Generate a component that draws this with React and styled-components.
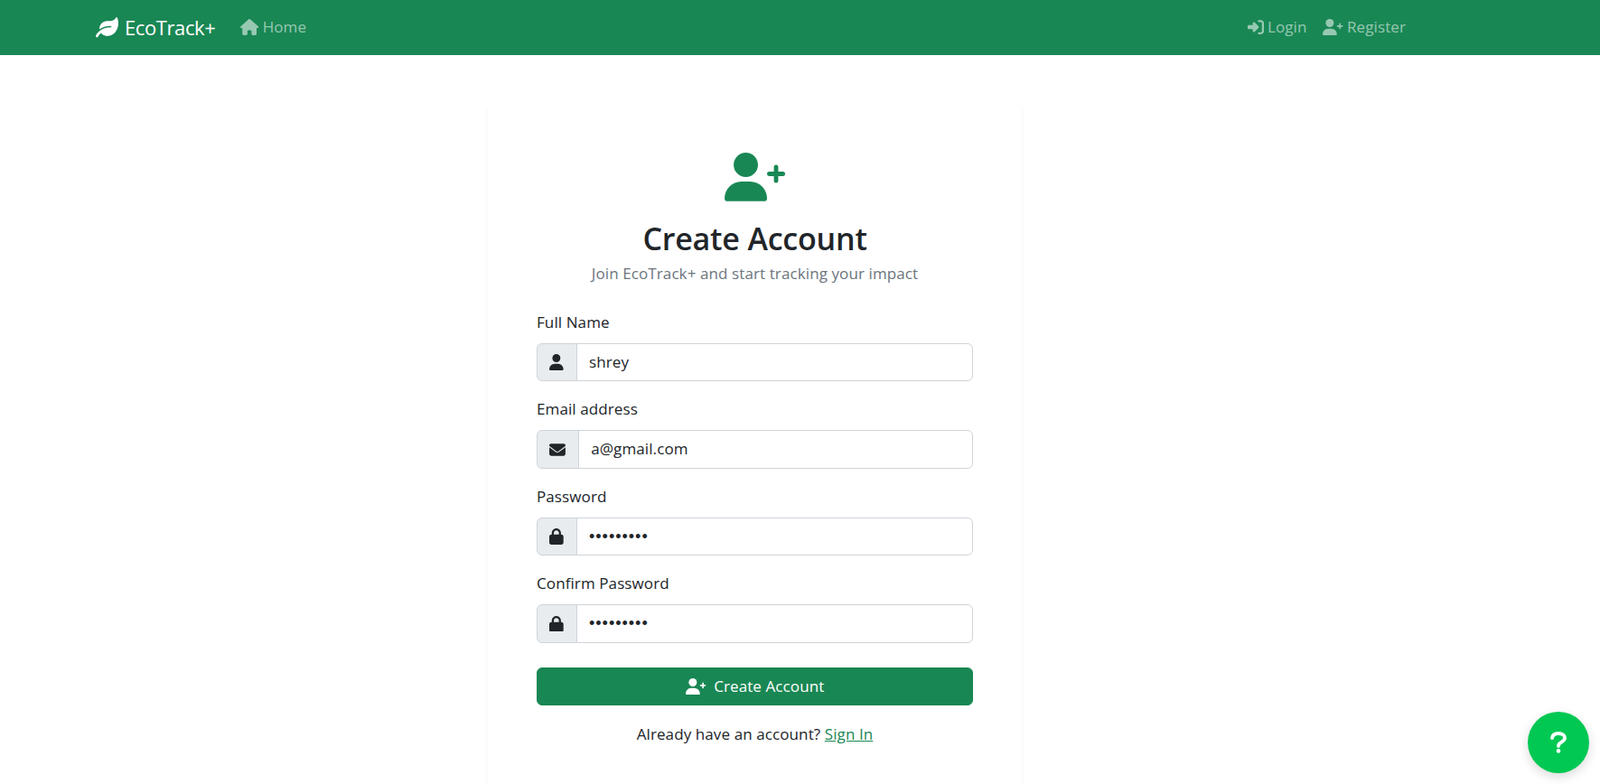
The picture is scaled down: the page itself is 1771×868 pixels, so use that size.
import React from 'react'
import styled, { createGlobalStyle } from 'styled-components'
import { FaLeaf } from 'react-icons/fa'
import {
  FaHouse,
  FaRightToBracket,
  FaUser,
  FaEnvelope,
  FaLock,
} from 'react-icons/fa6'

const Global = createGlobalStyle`
  * { box-sizing: border-box; }
  html, body { margin: 0; height: 868px; overflow: hidden; background: #fff; }
  body {
    font-family: "Open Sans", "Liberation Sans", sans-serif;
    font-size: 17px;
    line-height: 1.5;
    letter-spacing: 0.1px;
    color: #212529;
  }
`

// the plus in the reference is shorter than the one in react-icons, so this one is drawn
const UserPlus = ({ className }) => (
  <svg className={className} viewBox="0 0 640 512" fill="currentColor">
    <circle cx="224" cy="128" r="128" />
    <path d="M0 482.3C0 383.8 79.8 304 178.3 304h91.4C368.2 304 448 383.8 448 482.3c0 16.4-13.3 29.7-29.7 29.7H29.7C13.3 512 0 498.7 0 482.3z" />
    <path d="M543 151v146M470 224h146" stroke="currentColor" strokeWidth="46" strokeLinecap="round" fill="none" />
  </svg>
)

const QuestionMark = () => (
  <svg viewBox="0 0 18 24" fill="none" stroke="currentColor" strokeWidth="3.8" strokeLinecap="round">
    <path d="M2 7.2C2.4 3.8 5 2 9 2c4 0 7 2 7 5 0 2.6-2 3.8-4 4.9-1.7.9-3 1.8-3 4.1" />
    <circle cx="9" cy="21.4" r="2.3" fill="currentColor" stroke="none" />
  </svg>
)

// svg width attr is 1em, so width:auto won't follow the viewBox - set it per glyph
const HouseIcon = styled(FaHouse)`width: 20.25px; height: 18px;`
const LoginIcon = styled(FaRightToBracket)`width: 18px; height: 18px;`
const UserPlusIcon = styled(UserPlus)`width: 22.5px; height: 18px;`
const UserIcon = styled(FaUser)`width: 15.68px; height: 17.92px;`
const EnvelopeIcon = styled(FaEnvelope)`width: 17.92px; height: 17.92px;`
const LockIcon = styled(FaLock)`width: 15.68px; height: 17.92px;`

const HeroIcon = styled(UserPlus)`
  width: 67.2px;
  height: 53.76px;
  margin-bottom: 20px;
  color: #198754;
`

const NavBar = styled.nav`
  display: flex;
  align-items: center;
  justify-content: space-between;
  height: 61px;
  padding: 0 215px 0 106px;
  background: #198754;
`

const NavGroup = styled.div`
  display: flex;
  align-items: center;
  gap: ${(p) => p.$gap}px;
`

const Brand = styled.a`
  display: flex;
  align-items: center;
  gap: 7px;
  font-size: 22px;
  letter-spacing: -0.4px;
  color: #fff;
  svg { width: 25px; height: 22.4px; }
`

const NavLink = styled.a`
  display: flex;
  align-items: center;
  gap: 4px;
  padding-bottom: 2px;
  color: rgba(255, 255, 255, 0.55);
`

const Main = styled.main`
  display: flex;
  justify-content: center;
  width: 1671px;
  padding-top: 54px;
`

const Card = styled.section`
  width: 591px;
  padding: 54px;
  background: #fff;
  border-radius: 6px;
  box-shadow: 0 2px 4px rgba(0, 0, 0, 0.05);
`

const Header = styled.header`
  display: flex;
  flex-direction: column;
  align-items: center;
  margin-bottom: 27px;
`

const Title = styled.h1`
  margin: 0 0 3px;
  font-size: 34px;
  font-weight: 600;
  line-height: 43px;
  letter-spacing: -0.2px;
`

const Subtitle = styled.p`
  margin: 0;
  line-height: 27px;
  color: #6c757d;
`

const Field = styled.div`
  margin-bottom: ${(p) => (p.$last ? 27 : 17)}px;
`

const Label = styled.label`
  display: block;
  margin-bottom: 10px;
  line-height: 27px;
`

const InputGroup = styled.div`
  display: flex;
  height: 42.5px;
`

const Addon = styled.span`
  display: flex;
  align-items: center;
  padding: 0 13.44px;
  background: #e9ecef;
  border: 1px solid #ced4da;
  border-radius: 6px 0 0 6px;
`

const Input = styled.input`
  flex: 1;
  min-width: 0;
  margin-left: -1px;
  padding: 0 13.44px ${(p) => (p.type === 'password' ? 0 : 2)}px;
  border: 1px solid #ced4da;
  border-radius: 0 6px 6px 0;
  font-family: ${(p) => (p.type === 'password' ? '"Liberation Sans"' : '"Open Sans"')}, sans-serif;
  font-size: ${(p) => (p.type === 'password' ? 18 : 17)}px;
  letter-spacing: ${(p) => (p.type === 'password' ? '1px' : '0.1px')};
  color: #212529;
  outline: none;
`

const SubmitButton = styled.button`
  display: flex;
  align-items: center;
  justify-content: center;
  gap: 9px;
  width: 100%;
  height: 42.5px;
  margin-bottom: 18px;
  background: #198754;
  border: 1px solid #198754;
  border-radius: 6px;
  font: inherit;
  letter-spacing: inherit;
  color: #fff;
`

const Footnote = styled.p`
  margin: 0;
  text-align: center;
  line-height: 27px;
`

const SignIn = styled.a`
  color: #198754;
  text-decoration: underline;
`

const HelpButton = styled.button`
  position: fixed;
  right: 12px;
  bottom: 12px;
  display: flex;
  align-items: center;
  justify-content: center;
  width: 68px;
  height: 68px;
  padding: 0;
  background: #00c853;
  border: 0;
  border-radius: 50%;
  box-shadow: 0 4px 12px rgba(0, 0, 0, 0.15);
  color: #fff;
  svg { width: 18px; height: 24px; }
`

const fields = [
  { label: 'Full Name', icon: <UserIcon />, type: 'text', value: 'shrey' },
  { label: 'Email address', icon: <EnvelopeIcon />, type: 'email', value: 'a@gmail.com' },
  { label: 'Password', icon: <LockIcon />, type: 'password', value: 'secret123' },
  { label: 'Confirm Password', icon: <LockIcon />, type: 'password', value: 'secret123' },
]

function App() {
  return (
    <>
      <Global />
      <NavBar>
        <NavGroup $gap={28}>
          <Brand><FaLeaf />EcoTrack+</Brand>
          <NavLink><HouseIcon />Home</NavLink>
        </NavGroup>
        <NavGroup $gap={18}>
          <NavLink><LoginIcon />Login</NavLink>
          <NavLink><UserPlusIcon />Register</NavLink>
        </NavGroup>
      </NavBar>
      <Main>
        <Card>
          <Header>
            <HeroIcon />
            <Title>Create Account</Title>
            <Subtitle>Join EcoTrack+ and start tracking your impact</Subtitle>
          </Header>
          <form onSubmit={(e) => e.preventDefault()}>
            {fields.map((f, i) => (
              <Field key={f.label} $last={i === fields.length - 1}>
                <Label>{f.label}</Label>
                <InputGroup>
                  <Addon>{f.icon}</Addon>
                  <Input type={f.type} defaultValue={f.value} />
                </InputGroup>
              </Field>
            ))}
            <SubmitButton type="submit"><UserPlusIcon />Create Account</SubmitButton>
          </form>
          <Footnote>Already have an account? <SignIn>Sign In</SignIn></Footnote>
        </Card>
      </Main>
      <HelpButton><QuestionMark /></HelpButton>
    </>
  )
}

export default App
